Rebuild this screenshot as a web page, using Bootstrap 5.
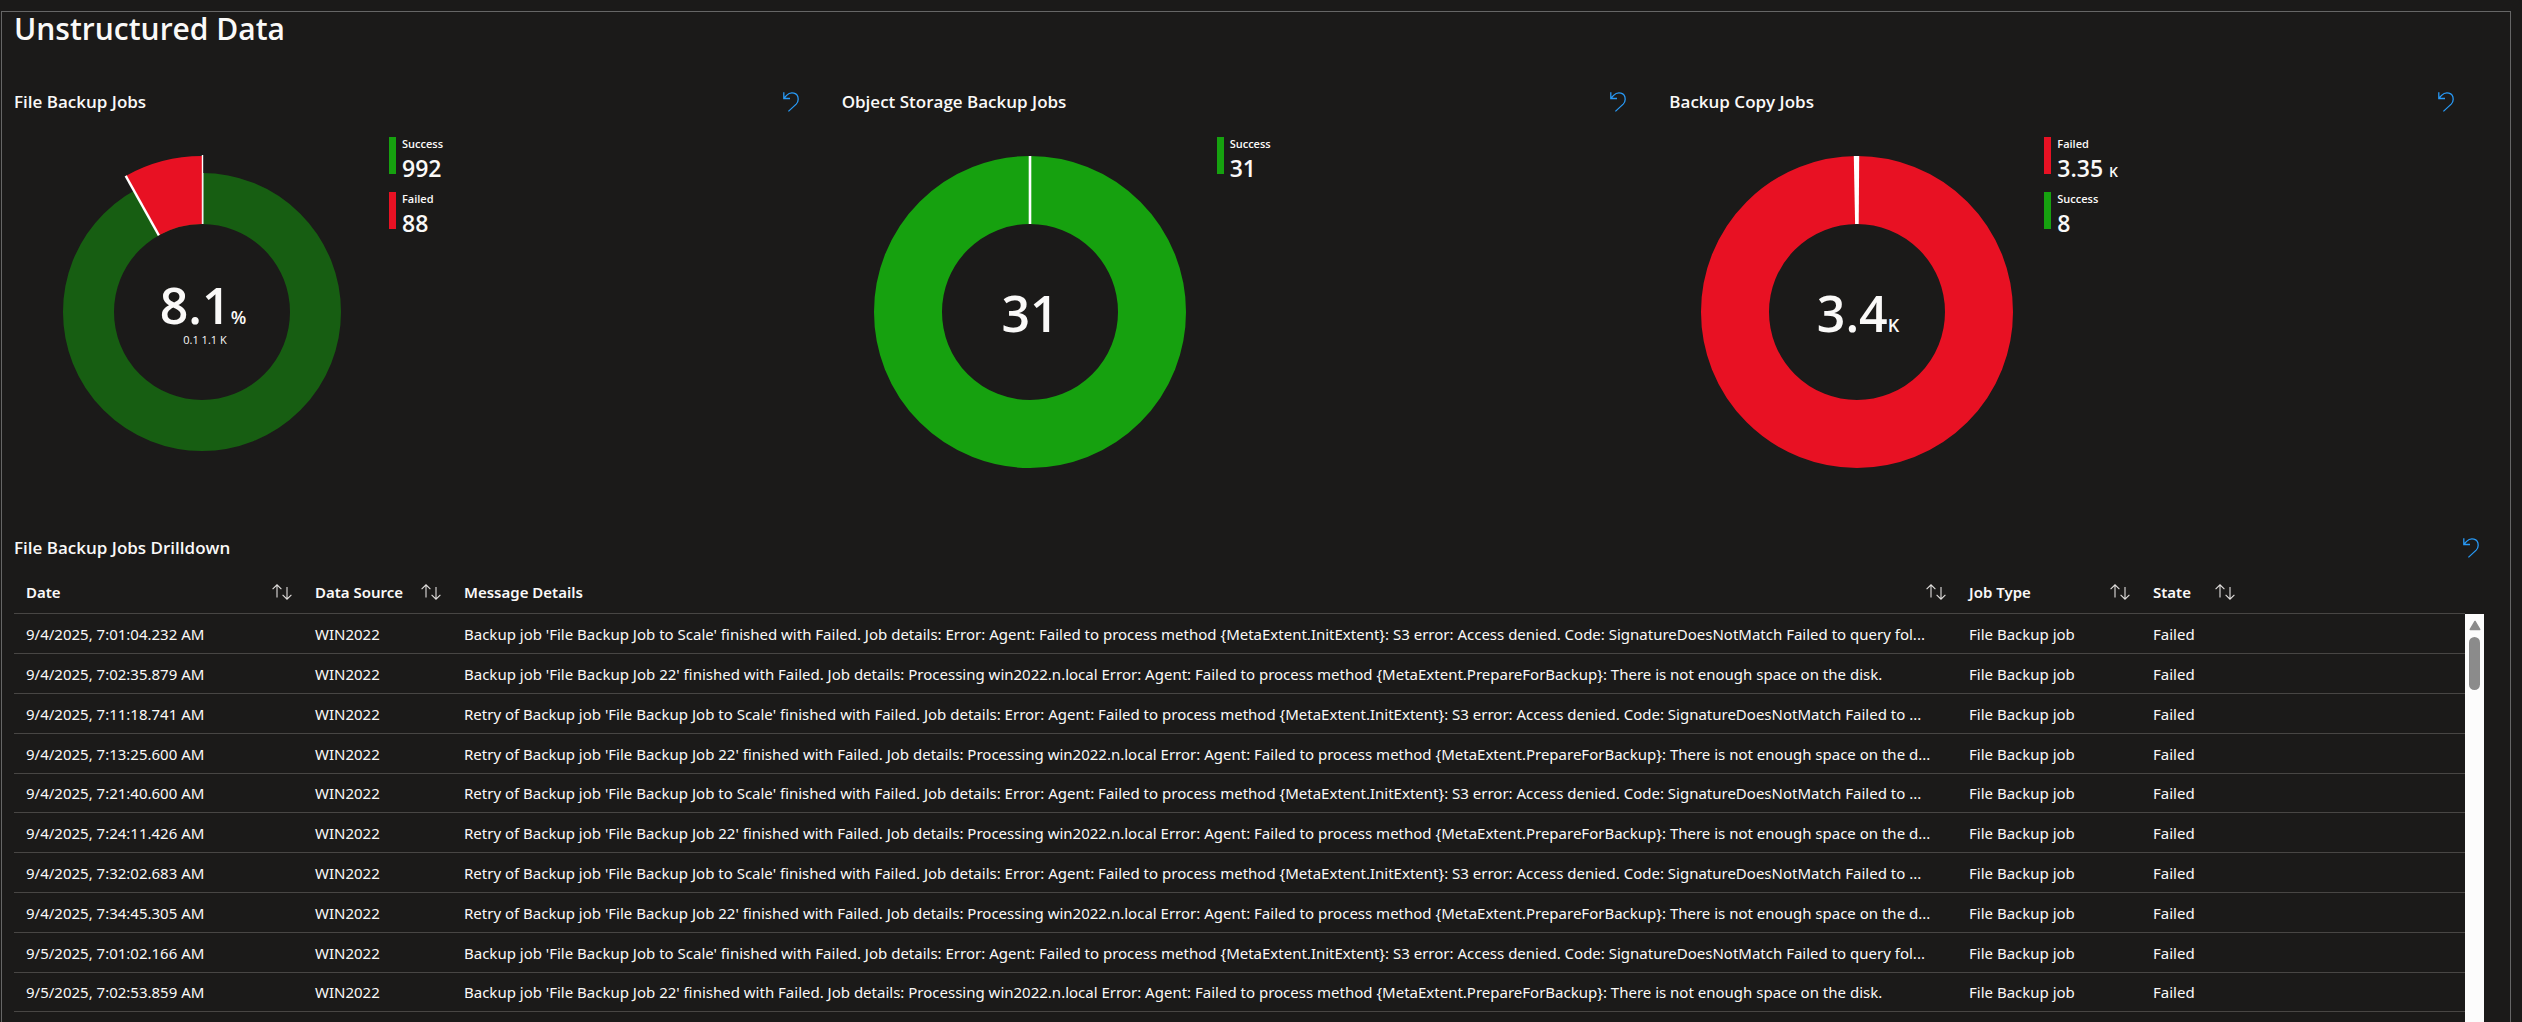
<!DOCTYPE html>
<html lang="en">
<head>
<meta charset="utf-8">
<meta name="viewport" content="width=device-width, initial-scale=1">
<title>Unstructured Data</title>
<link href="https://cdn.jsdelivr.net/npm/bootstrap@5.3.0/dist/css/bootstrap.min.css" rel="stylesheet">
<style>
  body { background: #1b1a19; color: #faf9f8; font-family: "Open Sans", "Noto Sans", sans-serif; font-size: 15px; }
  .board { border: 1px solid #666; border-bottom: 0; margin: 11px 11px 0 1px; padding: 0 13px 0 12px; }
  .board-title { font-size: 30px; line-height: 34px; font-weight: 600; }
  .tile-head { height: 44px; }
  .tile-title { font-size: 17px; line-height: 24px; font-weight: 600; }
  .tile .tile-head { padding-right: 43px; }
  .drill .tile-head { padding-right: 18px; }
  .charts { margin-top: 34px; }
  .chart-body { padding-top: 13px; }
  .drill { margin-top: 39px; }
  .donut { width: 375px; height: 350px; }
  .donut text { fill: #faf9f8; font-weight: 600; }
  .fig-lg { font-size: 50px; }
  .donut .fig-unit { font-size: 18px; }
  .donut .fig-sub { font-size: 11px; font-weight: 400; }
  .icon-btn { background: none; border: 0; padding: 0; color: #2899f5; line-height: 0; }
  .sort-btn { color: #e1dfdd; }
  .key { border-left: 7px solid; height: 37px; padding-left: 6px; margin-bottom: 18px; }
  .key-ok { border-color: #16a10f; }
  .key-bad { border-color: #e81123; }
  .key-name { color: #faf9f8; font-size: 11px; line-height: 14px; font-weight: 600; }
  .key-value { color: #faf9f8; font-size: 23px; line-height: 34px; font-weight: 600; }
  .key-unit { font-size: 14px; }
  .grid { table-layout: fixed; line-height: 20px; font-family: "Noto Sans", "Open Sans", sans-serif; }
  .grid th, .grid td { padding: 1px 11px 0 12px; height: 40px; border-bottom: 1px solid #484644; white-space: nowrap; overflow: hidden; text-overflow: ellipsis; }
  .grid th { height: 43px; padding-top: 2px; font-weight: 600; }
  .grid tbody tr:nth-child(5n) td { height: 39px; }
  .grid td.msg { padding-right: 2px; }
  .c-date { width: 289px; } .c-src { width: 149px; } .c-type { width: 184px; } .c-state { width: 324px; }
  .narrow { width: 82px; }
  .grid-wrap { padding-right: 13px; }
  .scroller { width: 19px; margin-top: 44px; background: #fcfcfc; padding-top: 6px; }
  .scroller-thumb { width: 11px; height: 53px; margin-top: 6px; border-radius: 6px; background: #8b8b8b; }
</style>
<script src="https://cdn.jsdelivr.net/npm/bootstrap@5.3.0/dist/js/bootstrap.bundle.min.js"></script>
</head>
<body class="d-flex flex-column min-vh-100">
<svg class="d-none" aria-hidden="true">
  <symbol id="undo" viewBox="0 0 16 20"><path d="M.8.3v6.2h6.2M1 6.3 3.6 3.4C7.5-.6 15.2.2 15.2 7.3c0 2-.7 3.5-2 4.8L5.4 19.4" fill="none" stroke="currentColor" stroke-width="1.3"/></symbol>
  <symbol id="sort" viewBox="0 0 20 16"><path d="M5 13.5V.8M.6 5.2 5 .8l4.4 4.4M15 3v12.2M10.6 10.8l4.4 4.4 4.4-4.4" fill="none" stroke="currentColor" stroke-width="1.1"/></symbol>
</svg>
<main class="board flex-fill d-flex flex-column">
  <h1 class="board-title mb-0">Unstructured Data</h1>

  <div class="charts row g-0">
    <section class="tile col-4">
      <div class="tile-head d-flex align-items-center justify-content-between">
        <h2 class="tile-title mb-0">File Backup Jobs</h2>
        <button type="button" class="icon-btn" aria-label="Reset File Backup Jobs"><svg width="16" height="20"><use href="#undo"/></svg></button>
      </div>
      <div class="chart-body d-flex">
        <svg class="donut" viewBox="-1 0 375 350" role="img" aria-label="File backup jobs">
          <circle cx="187" cy="175" r="113.5" fill="none" stroke="#175e12" stroke-width="51"/>
          <path d="M187 19A156 156 0 0 0 110.7 38.9L143.9 98.3A88 88 0 0 1 187 87Z" fill="#e81123"/>
          <path d="M110.7 38.9 143.9 98.3" stroke="#fff" stroke-width="2.4"/>
          <path d="M187.5 18V87" stroke="#fff" stroke-width="1.4"/>
          <path d="M188.4 36V87" stroke="#8fae8d" stroke-width="1"/>
          <text x="188" y="187" text-anchor="middle" class="fig-lg">8.1<tspan class="fig-unit">%</tspan></text>
          <text x="190" y="207" text-anchor="middle" class="fig-sub">0.1 1.1 K</text>
        </svg>
        <div>
          <div class="key key-ok"><div class="key-name">Success</div><div class="key-value">992</div></div>
          <div class="key key-bad"><div class="key-name">Failed</div><div class="key-value">88</div></div>
        </div>
      </div>
    </section>

    <section class="tile col-4">
      <div class="tile-head d-flex align-items-center justify-content-between">
        <h2 class="tile-title mb-0">Object Storage Backup Jobs</h2>
        <button type="button" class="icon-btn" aria-label="Reset Object Storage Backup Jobs"><svg width="16" height="20"><use href="#undo"/></svg></button>
      </div>
      <div class="chart-body d-flex">
        <svg class="donut" viewBox="-1 0 375 350" role="img" aria-label="Object storage backup jobs">
          <circle cx="187" cy="175" r="122" fill="none" stroke="#16a10f" stroke-width="68"/>
          <path d="M187 19V87" stroke="#fff" stroke-width="2.6"/>
          <text x="187" y="195" text-anchor="middle" class="fig-lg">31</text>
        </svg>
        <div>
          <div class="key key-ok"><div class="key-name">Success</div><div class="key-value">31</div></div>
        </div>
      </div>
    </section>

    <section class="tile col-4">
      <div class="tile-head d-flex align-items-center justify-content-between">
        <h2 class="tile-title mb-0">Backup Copy Jobs</h2>
        <button type="button" class="icon-btn" aria-label="Reset Backup Copy Jobs"><svg width="16" height="20"><use href="#undo"/></svg></button>
      </div>
      <div class="chart-body d-flex">
        <svg class="donut" viewBox="-1 0 375 350" role="img" aria-label="Backup copy jobs">
          <circle cx="187" cy="175" r="122" fill="none" stroke="#e81123" stroke-width="68"/>
          <path d="M183.8 19h5.4l-.5 68h-3.6Z" fill="#fff"/>
          <text x="188" y="195" text-anchor="middle" class="fig-lg">3.4<tspan class="fig-unit">K</tspan></text>
        </svg>
        <div>
          <div class="key key-bad"><div class="key-name">Failed</div><div class="key-value">3.35 <span class="key-unit">K</span></div></div>
          <div class="key key-ok"><div class="key-name">Success</div><div class="key-value">8</div></div>
        </div>
      </div>
    </section>
  </div>

  <section class="drill flex-fill d-flex flex-column">
    <div class="tile-head d-flex align-items-center justify-content-between">
      <h2 class="tile-title mb-0">File Backup Jobs Drilldown</h2>
      <button type="button" class="icon-btn" aria-label="Reset File Backup Jobs Drilldown"><svg width="16" height="20"><use href="#undo"/></svg></button>
    </div>
    <div class="grid-wrap d-flex flex-fill">
      <div class="flex-fill">
        <table class="grid w-100">
          <colgroup><col class="c-date"><col class="c-src"><col><col class="c-type"><col class="c-state"></colgroup>
          <thead>
            <tr>
              <th scope="col"><div class="d-flex align-items-center justify-content-between">Date<button type="button" class="icon-btn sort-btn" aria-label="Sort by date"><svg width="20" height="16"><use href="#sort"/></svg></button></div></th>
              <th scope="col"><div class="d-flex align-items-center justify-content-between">Data Source<button type="button" class="icon-btn sort-btn" aria-label="Sort by data source"><svg width="20" height="16"><use href="#sort"/></svg></button></div></th>
              <th scope="col"><div class="d-flex align-items-center justify-content-between">Message Details<button type="button" class="icon-btn sort-btn" aria-label="Sort by message"><svg width="20" height="16"><use href="#sort"/></svg></button></div></th>
              <th scope="col"><div class="d-flex align-items-center justify-content-between">Job Type<button type="button" class="icon-btn sort-btn" aria-label="Sort by job type"><svg width="20" height="16"><use href="#sort"/></svg></button></div></th>
              <th scope="col"><div class="narrow d-flex align-items-center justify-content-between">State<button type="button" class="icon-btn sort-btn" aria-label="Sort by state"><svg width="20" height="16"><use href="#sort"/></svg></button></div></th>
            </tr>
          </thead>
          <tbody>
            <tr><td>9/4/2025, 7:01:04.232 AM</td><td>WIN2022</td><td class="msg">Backup job 'File Backup Job to Scale' finished with Failed. Job details: Error: Agent: Failed to process method {MetaExtent.InitExtent}: S3 error: Access denied. Code: SignatureDoesNotMatch Failed to query fol...</td><td>File Backup job</td><td>Failed</td></tr>
            <tr><td>9/4/2025, 7:02:35.879 AM</td><td>WIN2022</td><td class="msg">Backup job 'File Backup Job 22' finished with Failed. Job details: Processing win2022.n.local Error: Agent: Failed to process method {MetaExtent.PrepareForBackup}: There is not enough space on the disk.</td><td>File Backup job</td><td>Failed</td></tr>
            <tr><td>9/4/2025, 7:11:18.741 AM</td><td>WIN2022</td><td class="msg">Retry of Backup job 'File Backup Job to Scale' finished with Failed. Job details: Error: Agent: Failed to process method {MetaExtent.InitExtent}: S3 error: Access denied. Code: SignatureDoesNotMatch Failed to ...</td><td>File Backup job</td><td>Failed</td></tr>
            <tr><td>9/4/2025, 7:13:25.600 AM</td><td>WIN2022</td><td class="msg">Retry of Backup job 'File Backup Job 22' finished with Failed. Job details: Processing win2022.n.local Error: Agent: Failed to process method {MetaExtent.PrepareForBackup}: There is not enough space on the d...</td><td>File Backup job</td><td>Failed</td></tr>
            <tr><td>9/4/2025, 7:21:40.600 AM</td><td>WIN2022</td><td class="msg">Retry of Backup job 'File Backup Job to Scale' finished with Failed. Job details: Error: Agent: Failed to process method {MetaExtent.InitExtent}: S3 error: Access denied. Code: SignatureDoesNotMatch Failed to ...</td><td>File Backup job</td><td>Failed</td></tr>
            <tr><td>9/4/2025, 7:24:11.426 AM</td><td>WIN2022</td><td class="msg">Retry of Backup job 'File Backup Job 22' finished with Failed. Job details: Processing win2022.n.local Error: Agent: Failed to process method {MetaExtent.PrepareForBackup}: There is not enough space on the d...</td><td>File Backup job</td><td>Failed</td></tr>
            <tr><td>9/4/2025, 7:32:02.683 AM</td><td>WIN2022</td><td class="msg">Retry of Backup job 'File Backup Job to Scale' finished with Failed. Job details: Error: Agent: Failed to process method {MetaExtent.InitExtent}: S3 error: Access denied. Code: SignatureDoesNotMatch Failed to ...</td><td>File Backup job</td><td>Failed</td></tr>
            <tr><td>9/4/2025, 7:34:45.305 AM</td><td>WIN2022</td><td class="msg">Retry of Backup job 'File Backup Job 22' finished with Failed. Job details: Processing win2022.n.local Error: Agent: Failed to process method {MetaExtent.PrepareForBackup}: There is not enough space on the d...</td><td>File Backup job</td><td>Failed</td></tr>
            <tr><td>9/5/2025, 7:01:02.166 AM</td><td>WIN2022</td><td class="msg">Backup job 'File Backup Job to Scale' finished with Failed. Job details: Error: Agent: Failed to process method {MetaExtent.InitExtent}: S3 error: Access denied. Code: SignatureDoesNotMatch Failed to query fol...</td><td>File Backup job</td><td>Failed</td></tr>
            <tr><td>9/5/2025, 7:02:53.859 AM</td><td>WIN2022</td><td class="msg">Backup job 'File Backup Job 22' finished with Failed. Job details: Processing win2022.n.local Error: Agent: Failed to process method {MetaExtent.PrepareForBackup}: There is not enough space on the disk.</td><td>File Backup job</td><td>Failed</td></tr>
          </tbody>
        </table>
      </div>
      <div class="scroller flex-shrink-0 d-flex flex-column align-items-center" aria-hidden="true">
        <svg class="flex-shrink-0" width="12" height="11"><path d="M6 1.5 10.7 9.5H1.3Z" fill="#8b8b8b" stroke="#8b8b8b" stroke-width="1.5" stroke-linejoin="round"/></svg>
        <div class="scroller-thumb"></div>
      </div>
    </div>
  </section>
</main>
</body>
</html>
